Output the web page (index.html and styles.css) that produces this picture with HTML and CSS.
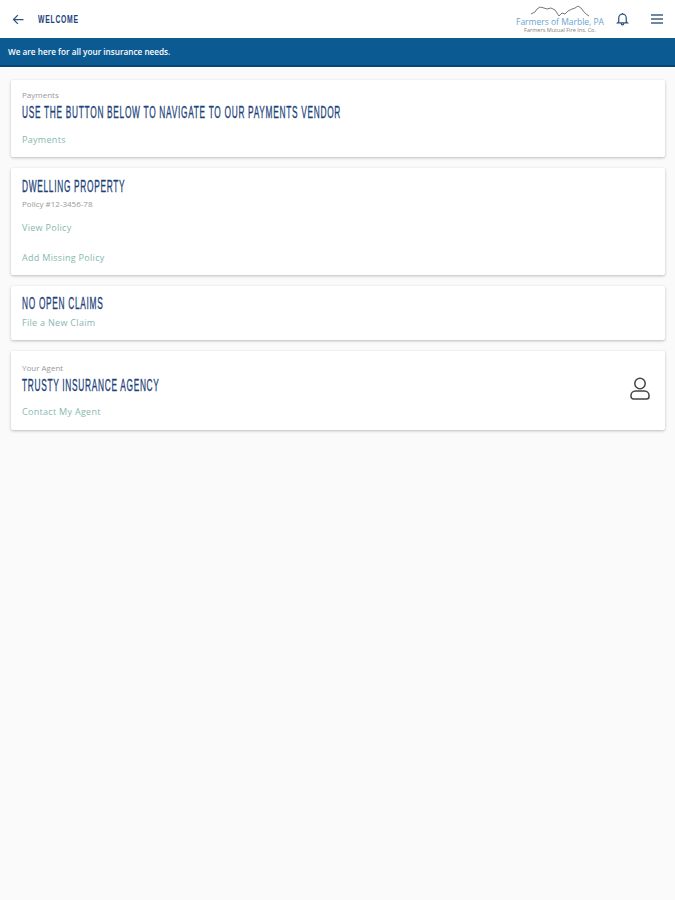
FILE: index.html
```html
<!DOCTYPE html>
<html lang="en">

<head>
  <meta charset="UTF-8">
  <meta name="viewport" content="width=device-width, initial-scale=1.0">
  <title>Welcome</title>
  <link rel="stylesheet" href="styles.css">
</head>

<body>
  <header class="topbar">
    <svg class="back-icon" viewBox="0 0 24 24" width="15" height="15">
      <path d="M20 12H5M11 5l-7 7 7 7" fill="none" stroke="#2b5580" stroke-width="2"/>
    </svg>
    <span class="page-title heading-font">WELCOME</span>
    <div class="logo">
      <svg class="logo-hills" viewBox="0 0 60 13" width="60" height="13">
        <path d="M1 9 L5 7 L7 4 L10 2 L14 3 L17 4 L21 3 L25 5 L27 8 L29 11 L32 8 L35 9 L38 6 L42 4 L45 3 L48 1 L51 3 L54 7 L56 9 L59 11" fill="none" stroke="#555" stroke-width="0.8"/>
      </svg>
      <span class="logo-name">Farmers of Marble, PA</span>
      <span class="logo-sub">Farmers Mutual Fire Ins. Co.</span>
    </div>
    <svg class="bell-icon" viewBox="0 0 24 24" width="15" height="15">
      <path d="M12 3v2M6 17V11a6 6 0 0 1 12 0v6l2 2H4zM10 20a2 2 0 0 0 4 0" fill="none" stroke="#2b5580" stroke-width="2"/>
    </svg>
    <svg class="menu-icon" viewBox="0 0 24 24" width="16" height="16">
      <path d="M3 6h18M3 12h18M3 18h18" fill="none" stroke="#3d6285" stroke-width="2"/>
    </svg>
  </header>

  <div class="banner">We are here for all your insurance needs.</div>

  <main class="cards">
    <section class="card card-payments">
      <p class="small-label">Payments</p>
      <h2 class="heading-font">USE THE BUTTON BELOW TO NAVIGATE TO OUR PAYMENTS VENDOR</h2>
      <a class="card-link link-first">Payments</a>
    </section>

    <section class="card card-policy">
      <h2 class="heading-font">DWELLING PROPERTY</h2>
      <p class="small-label">Policy #12-3456-78</p>
      <a class="card-link link-view">View Policy</a>
      <a class="card-link link-add">Add Missing Policy</a>
    </section>

    <section class="card card-claims">
      <h2 class="heading-font">NO OPEN CLAIMS</h2>
      <a class="card-link">File a New Claim</a>
    </section>

    <section class="card card-agent">
      <div>
        <p class="small-label">Your Agent</p>
        <h2 class="heading-font">TRUSTY INSURANCE AGENCY</h2>
        <a class="card-link link-first">Contact My Agent</a>
      </div>
      <svg class="agent-icon" viewBox="0 0 20 23" width="20" height="23">
        <circle cx="10" cy="6.500" r="5.200" fill="none" stroke="#444" stroke-width="1.500"/>
        <path d="M3.500 22h13a2.500 2.500 0 0 0 2.500-2.500v-1a4.500 4.500 0 0 0-4.500-4.500h-9a4.500 4.500 0 0 0-4.500 4.500v1a2.500 2.500 0 0 0 2.500 2.500z" fill="none" stroke="#444" stroke-width="1.500"/>
      </svg>
    </section>
  </main>
</body>

</html>
```

FILE: styles.css
```css
body {
  font-family: 'Open Sans', sans-serif;
  background: #fafafa;
  margin: 0;
  height: 900px;
  overflow: hidden;
}

p,
h2 {
  margin: 0;
}

/* no condensed font installed, so squeeze Liberation Sans */
.heading-font {
  font-family: 'Liberation Sans', sans-serif;
  font-weight: 400;
  color: #1b4179;
  white-space: nowrap;
  letter-spacing: 1.350px;
  transform-origin: left center;
  transform: scaleX(0.52);
  -webkit-text-stroke: 0.3px #1b4179;
}

.topbar {
  display: flex;
  align-items: center;
  height: 38px;
  background: #fff;
  padding: 0 10px 0 11px;
  box-sizing: border-box;
}

.page-title {
  font-size: 11px;
  font-weight: 700;
  margin-left: 12px;
  letter-spacing: 1.200px;
  transform: scaleX(0.62);
  -webkit-text-stroke: 0;
}

.logo {
  margin-left: auto;
  width: 92px;
  display: flex;
  flex-direction: column;
  align-items: center;
  margin-right: 9px;
}

.logo-hills {
  margin-bottom: -1px;
}

.logo-name {
  font-size: 8.500px;
  line-height: 10px;
  color: #6ba3d3;
  white-space: nowrap;
}

.logo-sub {
  font-size: 5.500px;
  line-height: 7px;
  color: #808080;
  white-space: nowrap;
}

.bell-icon {
  margin-right: 19px;
  margin-top: -2px;
}

.banner {
  height: 29px;
  box-sizing: border-box;
  background: #0b5a92;
  border-bottom: 2px solid #0a4674;
  color: #fff;
  font-size: 8.200px;
  font-weight: 600;
  line-height: 27px;
  padding-left: 8px;
}

.cards {
  display: flex;
  flex-direction: column;
  gap: 11px;
  padding: 13px 10px 0 11px;
}

.card {
  background: #fff;
  border-radius: 2px;
  box-shadow: 0 1px 3px rgba(0, 0, 0, 0.25);
  padding: 0 11px;
  box-sizing: border-box;
}

.card h2 {
  font-size: 16px;
  line-height: 18px;
}

.small-label {
  font-size: 8px;
  line-height: 11px;
  color: #999;
}

.card-link {
  display: block;
  font-size: 9px;
  line-height: 12px;
  letter-spacing: 0.3px;
  color: #86b8af;
}

.card-payments {
  height: 77px;
  padding-top: 9px;
}

.card-payments h2 {
  margin-top: 4px;
}

.link-first {
  margin-top: 12px;
}

.card-policy {
  height: 107px;
  padding-top: 10px;
}

.card-policy .small-label {
  margin-top: 2px;
}

.link-view {
  margin-top: 13px;
}

.link-add {
  margin-top: 18px;
}

.card-claims {
  height: 54px;
  padding-top: 9px;
}

.card-claims .card-link {
  margin-top: 4px;
}

.card-agent {
  height: 79px;
  padding-top: 11px;
  padding-right: 15px;
  display: flex;
  justify-content: space-between;
  align-items: flex-start;
}

.card-agent h2 {
  margin-top: 4px;
}

.card-agent .link-first {
  margin-top: 11px;
}

.agent-icon {
  margin-top: 15px;
}
```
